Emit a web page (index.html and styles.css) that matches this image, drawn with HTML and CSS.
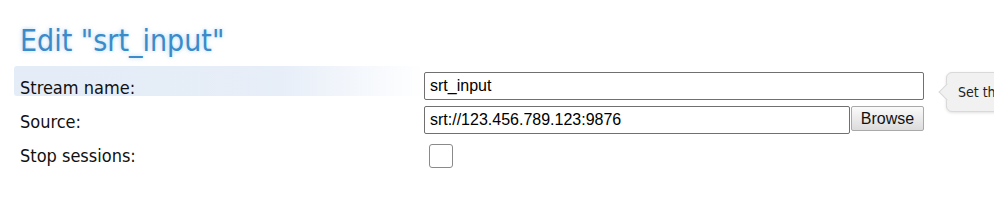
FILE: index.html
```html
<!DOCTYPE html>
<html lang="en">
<head>
    <meta charset="UTF-8">
    <meta name="viewport" content="width=device-width, initial-scale=1.0">
    <title>Edit stream</title>
    <link rel="stylesheet" href="styles.css">
</head>
<body>
    <div class="page">
        <h1>Edit "srt_input"</h1>
        <div class="stream-form">
            <div class="form-row active">
                <label class="form-label" for="stream-name">Stream name:</label>
                <input id="stream-name" class="form-input wide" type="text" value="srt_input">
                <div class="help-tip">Set the name this stream will be recognised by.</div>
            </div>
            <div class="form-row">
                <label class="form-label" for="source">Source:</label>
                <input id="source" class="form-input" type="text" value="srt://123.456.789.123:9876">
                <button class="browse-button">Browse</button>
            </div>
            <div class="form-row">
                <label class="form-label" for="stop-sessions">Stop sessions:</label>
                <input id="stop-sessions" class="form-check" type="checkbox">
            </div>
        </div>
    </div>
</body>
</html>
```

FILE: styles.css
```css
html, body {
    overflow: hidden;
}
body {
    margin: 0;
    background: #fff;
    color: #111;
    font-family: 'DejaVu Sans Condensed', 'DejaVu Sans', sans-serif;
}
.page {
    padding-left: 14px;
}
h1 {
    margin: 26px 0 10px 6px;
    font-size: 30px;
    line-height: 30px;
    font-weight: normal;
    color: #3a8bc9;
    text-shadow: 0 0 4px rgba(110, 175, 230, 0.55);
}
.form-row {
    display: flex;
    align-items: flex-start;
    height: 34px;
    position: relative;
}
.form-label {
    box-sizing: border-box;
    width: 410px;
    flex: none;
    padding: 13px 6px 0;
    height: 30px;
    font-size: 18px;
    line-height: 18px;
    border-radius: 3px;
}
.active .form-label {
    background: linear-gradient(to right, #e3ecf7 0%, #e7eef8 65%, rgba(240, 245, 251, 0) 100%);
}
.form-input {
    box-sizing: border-box;
    margin-top: 6px;
    width: 426px;
    height: 28px;
    padding: 0 5px;
    border: 1px solid #707070;
    border-radius: 2px;
    font-family: 'Liberation Sans', Arial, sans-serif;
    font-size: 16px;
    color: #000;
    background: #fff;
}
.form-input.wide {
    width: 500px;
}
.browse-button {
    box-sizing: border-box;
    margin: 6px 0 0 1px;
    width: 73px;
    height: 25px;
    padding: 0;
    border: 1px solid #a9a9a9;
    border-radius: 2px;
    background: linear-gradient(#fafafa, #dcdcdc);
    font-family: 'Liberation Sans', Arial, sans-serif;
    font-size: 16px;
    color: #111;
}
.form-check {
    -webkit-appearance: none;
    appearance: none;
    box-sizing: border-box;
    margin: 10px 0 0 5px;
    width: 24px;
    height: 24px;
    border: 1px solid #8a8a8a;
    border-radius: 3px;
    background: #fff;
}
.help-tip {
    position: absolute;
    left: 932px;
    top: 6px;
    box-sizing: border-box;
    height: 40px;
    padding: 10px 11px;
    white-space: nowrap;
    font-size: 14px;
    line-height: 18px;
    color: #222;
    background: #f1f1f1;
    border: 1px solid #d9d9d9;
    border-radius: 6px;
    box-shadow: 0 1px 3px rgba(0, 0, 0, 0.12);
}
.help-tip::before {
    content: '';
    position: absolute;
    left: -6px;
    top: 13px;
    width: 11px;
    height: 11px;
    background: #f1f1f1;
    border-left: 1px solid #d9d9d9;
    border-bottom: 1px solid #d9d9d9;
    transform: rotate(45deg);
}
```
